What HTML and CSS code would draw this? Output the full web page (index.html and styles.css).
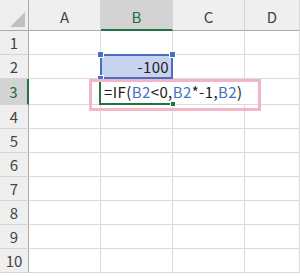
FILE: index.html
```html
<!DOCTYPE html>
<html lang="ja">
<head>
    <meta charset="UTF-8">
    <meta name="viewport" content="width=device-width, initial-scale=1.0">
    <title>Sheet</title>
    <link rel="stylesheet" href="styles.css">
</head>
<body>
    <div class="sheet">
        <div class="corner"><span class="tri"></span></div>
        <div class="colhead">A</div>
        <div class="colhead active">B</div>
        <div class="colhead">C</div>
        <div class="colhead">D</div>

        <div class="rowhead">1</div>
        <div class="cell"></div><div class="cell"></div><div class="cell"></div><div class="cell"></div>

        <div class="rowhead">2</div>
        <div class="cell"></div>
        <div class="cell sel">-100
            <span class="dot tl"></span><span class="dot tr"></span><span class="dot bl"></span>
        </div>
        <div class="cell"></div><div class="cell"></div>

        <div class="rowhead active">3</div>
        <div class="cell"></div>
        <div class="cell edit"><span class="formula">=IF(<span class="ref">B2</span>&lt;0,<span class="ref">B2</span>*-1,<span class="ref">B2</span>)</span><span class="handle"></span></div>
        <div class="cell spill"></div><div class="cell"></div>

        <div class="rowhead">4</div>
        <div class="cell"></div><div class="cell"></div><div class="cell"></div><div class="cell"></div>
        <div class="rowhead">5</div>
        <div class="cell"></div><div class="cell"></div><div class="cell"></div><div class="cell"></div>
        <div class="rowhead">6</div>
        <div class="cell"></div><div class="cell"></div><div class="cell"></div><div class="cell"></div>
        <div class="rowhead">7</div>
        <div class="cell"></div><div class="cell"></div><div class="cell"></div><div class="cell"></div>
        <div class="rowhead">8</div>
        <div class="cell"></div><div class="cell"></div><div class="cell"></div><div class="cell"></div>
        <div class="rowhead">9</div>
        <div class="cell"></div><div class="cell"></div><div class="cell"></div><div class="cell"></div>
        <div class="rowhead">10</div>
        <div class="cell"></div><div class="cell"></div><div class="cell"></div><div class="cell"></div>

        <div class="mark"></div>
    </div>
</body>
</html>
```

FILE: styles.css
```css
body {
    margin: 0;
    background: #fff;
    overflow: hidden;
    font-family: "Noto Sans CJK JP", "Noto Sans", sans-serif;
}
.sheet {
    position: relative;
    display: grid;
    grid-template-columns: 29px 72px 72px 72px 1fr;
    grid-template-rows: 31px 24px 24px 26px repeat(7, 24px);
    width: 300px;
}
.corner {
    background: #efefef;
    border-right: 1px solid #ababab;
    border-bottom: 1px solid #ababab;
    position: relative;
}
.tri {
    position: absolute;
    right: 3px;
    bottom: 3px;
    width: 0;
    height: 0;
    border-left: 15px solid transparent;
    border-bottom: 15px solid #c1c1c1;
}
.colhead {
    background: #efefef;
    border-right: 1px solid #d5d5d5;
    border-bottom: 1px solid #ababab;
    display: flex;
    align-items: center;
    justify-content: center;
    font-size: 15px;
    color: #444;
    padding-top: 2px;
}
.colhead.active {
    background: #d3d3d3;
    border-bottom: 2px solid #217346;
    color: #1f6b43;
    padding-top: 3px;
}
.rowhead {
    background: #efefef;
    border-right: 1px solid #ababab;
    border-bottom: 1px solid #d5d5d5;
    display: flex;
    align-items: center;
    justify-content: center;
    font-size: 15px;
    color: #444;
}
.rowhead.active {
    background: #d3d3d3;
    border-right: 2px solid #217346;
    color: #1f6b43;
}
.cell {
    border-right: 1px solid #dadada;
    border-bottom: 1px solid #dadada;
    position: relative;
    font-size: 15px;
    color: #222;
}
.sel {
    background: #c8d4ef;
    display: flex;
    align-items: center;
    justify-content: flex-end;
    padding-right: 3px;
    letter-spacing: 0.3px;
}
.sel::after {
    content: "";
    position: absolute;
    left: -1px;
    top: -1px;
    right: -1px;
    bottom: -1px;
    border: 2px solid #4a6fbf;
}
.dot {
    position: absolute;
    width: 5px;
    height: 5px;
    background: #4a6fbf;
    border: 1px solid #fff;
    z-index: 2;
}
.dot.tl { left: -4px; top: -4px; }
.dot.tr { right: -4px; top: -4px; }
.dot.bl { left: -4px; bottom: -4px; }
.edit {
    border-right: none;
    display: flex;
    align-items: center;
    padding-left: 3px;
    white-space: nowrap;
}
.edit::after {
    content: "";
    position: absolute;
    left: -2px;
    top: 0;
    right: 2px;
    bottom: -1px;
    border-left: 2px solid #217346;
    border-bottom: 2px solid #217346;
}
.formula {
    position: relative;
    z-index: 1;
    letter-spacing: 0.4px;
}
.ref {
    color: #4472c4;
}
.handle {
    position: absolute;
    right: -3px;
    bottom: -3px;
    width: 4px;
    height: 4px;
    background: #217346;
    border: 1px solid #fff;
    z-index: 2;
}
.spill {
    border-right: none;
}
.mark {
    position: absolute;
    left: 89px;
    top: 79px;
    width: 172px;
    height: 32px;
    box-sizing: border-box;
    border: 3px solid #f4b5c8;
    z-index: 3;
}
```
